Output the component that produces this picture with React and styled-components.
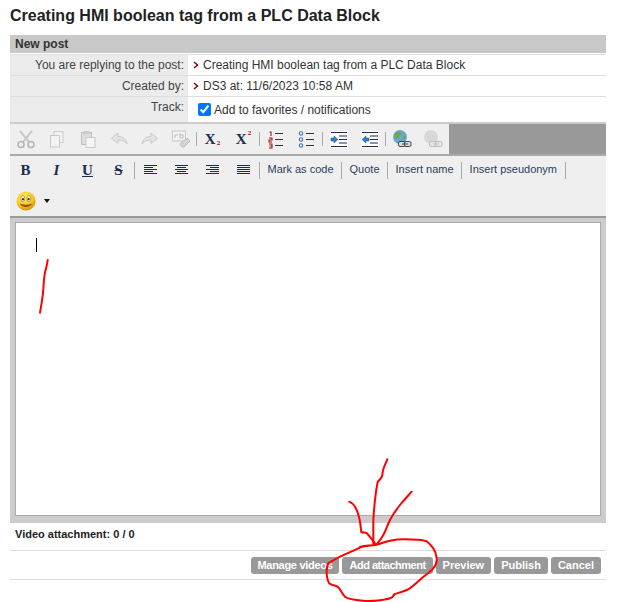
import React from "react";
import styled, { createGlobalStyle } from "styled-components";

const Global = createGlobalStyle`
  html, body { margin: 0; padding: 0; background: #fff; }
  body { font-family: "Liberation Sans", Arial, sans-serif; font-size: 12px; color: #333; }
`;
const Page = styled.div`
  position: relative; width: 630px; height: 602px; overflow: hidden; box-sizing: border-box; padding: 0 24px 0 10px;
`;
const Title = styled.h1`
  margin: 0; height: 35px; padding-top: 6px; box-sizing: border-box; font-size: 16px; line-height: 19px; font-weight: bold; color: #222;
`;
const SectionHead = styled.div`
  height: 18px; background: #c8c8c8; padding-left: 5px; font-size: 12px; line-height: 18px; font-weight: bold; color: #333;
`;
const Table = styled.div`
  display: grid; grid-template-columns: 178px 1fr; margin-top: 1px;
`;
const Label = styled.div`
  background: #ebebeb; height: ${p => p.$h}px; line-height: ${p => p.$lh || p.$h}px; text-align: right; padding-right: 4px;
  box-sizing: border-box; border-top: 1px solid #ddd; color: #444;
`;
const Value = styled.div`
  height: ${p => p.$h}px; display: flex; align-items: center; gap: 4px; padding-left: 5px; box-sizing: border-box; border-top: 1px solid #ddd; color: #333;
`;
const TrackValue = styled(Value)`
  padding: 0 0 0 10px; gap: 3px;
`;
const Check = styled.input`
  margin: 0; width: 13px; height: 13px; accent-color: #0075ff;
`;
const TopBar = styled.div`
  display: flex; height: 34px; background: #999; border-top: 2px solid #ccc; border-bottom: 2px solid #aaa; box-sizing: border-box;
`;
const TopTools = styled.div`
  width: 439px; background: #efefef; display: flex; align-items: center; box-sizing: border-box;
`;
const LowBar = styled.div`
  height: 62px; background: #efefef; border-bottom: 2px solid #999; box-sizing: border-box; display: flex; flex-direction: column;
`;
const ToolRow = styled.div`
  display: flex; align-items: center; height: 28px; margin-top: ${p => p.$mt || 0}px;
`;
const Tool = styled.div`
  width: ${p => p.$w || 31}px; height: 24px; flex: none; display: flex; align-items: center; justify-content: center;
  font-family: "Liberation Serif", serif; font-weight: bold; font-size: 15px; color: #1d2b4f; line-height: 1;
`;
const Sep = styled.div`
  width: 1px; height: ${p => p.$h || 17}px; flex: none; background: #aaa;
`;
const TextTool = styled.div`
  flex: none; color: #2c4060; font-size: 11px; line-height: 14px; padding: 0 7.500px 2px; white-space: nowrap;
`;
const Sup = styled.span`
  font-size: 7px; color: #a00; align-self: ${p => p.$up ? "flex-start" : "flex-end"}; margin: ${p => p.$up ? "3px 0 0 1px" : "0 0 4px 1px"};
`;
const EditorFrame = styled.div`
  background: #ccc; height: 305px; padding: 4px 5px 7px; box-sizing: border-box;
`;
const Editor = styled.div`
  height: 100%; background: #fff; border: 1px solid #aaa; box-sizing: border-box; padding: 15px 20px;
`;
const Caret = styled.div`
  width: 1px; height: 14px; background: #000;
`;
const Attach = styled.div`
  height: 27px; padding: 4px 0 0 5px; box-sizing: border-box; font-weight: bold; font-size: 11px; line-height: 14px; color: #222;
`;
const Actions = styled.div`
  height: 30px; border-top: 1px solid #ddd; border-bottom: 1px solid #ddd; box-sizing: border-box; display: flex; justify-content: flex-end; align-items: center; gap: 3px; padding-right: 5px;
`;
const Btn = styled.div`
  height: 17px; padding: 0 7px; border-radius: 3px; background: #999; color: #fff; font-weight: bold; font-size: 11px; line-height: 17px; white-space: nowrap;
  letter-spacing: ${p => p.$ls || 0}px;
`;
const Ink = styled.svg`
  position: absolute; left: 0; top: 0; width: 630px; height: 602px; pointer-events: none;
`;

const Chev = () => (
  <svg width="6" height="8" viewBox="0 0 6 8"><path d="M1 1l3.500 3L1 7" fill="none" stroke="#7a0a0a" strokeWidth="1.500" /></svg>
);
const G = ({ children }) => <svg width="20" height="20" viewBox="0 0 20 20">{children}</svg>;
const faint = "#c9c9c9";
const Scissors = () => (
  <G><path d="M4 2l9 11M16 2L7 13" stroke={faint} strokeWidth="2" fill="none" /><circle cx="5" cy="15.500" r="3" fill="none" stroke="#b5b5b5" strokeWidth="1.600" /><circle cx="15" cy="15.500" r="3" fill="none" stroke="#b5b5b5" strokeWidth="1.600" /></G>
);
const Copy = () => (
  <G><rect x="7" y="2.500" width="9" height="11" fill="#f3f3f3" stroke={faint} /><rect x="3.500" y="6.500" width="9" height="11.500" fill="#f3f3f3" stroke={faint} /></G>
);
const Paste = () => (
  <G><rect x="3.500" y="3.500" width="10" height="12" fill="#ddd" stroke="#c0c0c0" /><rect x="5.500" y="2" width="6" height="3" fill="#ccc" /><rect x="8" y="8.500" width="9" height="10" fill="#f5f5f5" stroke={faint} /></G>
);
const Undo = () => (
  <G><path d="M2.500 9.500L9 4v3.500c5 0 8 2.500 9 7.500-2-3-5-4-9-4v3.500z" fill="#e4e4e4" stroke={faint} /></G>
);
const Redo = () => (
  <G><path d="M17.500 9.500L11 4v3.500c-5 0-8 2.500-9 7.500 2-3 5-4 9-4v3.500z" fill="#e4e4e4" stroke={faint} /></G>
);
const Erase = () => (
  <G><rect x="1.500" y="2" width="13" height="10" fill="#f2f2f2" stroke={faint} /><path d="M4 9V6h3M9 4v5h3V6H9" fill="none" stroke="#bbb" /><path d="M9 15l7-6 3 3-6 6h-2z" fill="#d5d5d5" stroke="#bbb" /></G>
);
const OList = () => (
  <G><path d="M3.500 3h1.500v4M3 9h3v2H3v2h3M3 15h3v4H3M3.500 17H6" fill="none" stroke="#a01818" strokeWidth="1.100" /><path d="M9 4.500h8M9 10.500h8M9 16.500h8" stroke="#333" strokeWidth="1" /></G>
);
const UList = () => (
  <G><circle cx="4" cy="4.500" r="1.700" fill="none" stroke="#3a7ab8" strokeWidth="1.100" /><circle cx="4" cy="10.500" r="1.700" fill="none" stroke="#3a7ab8" strokeWidth="1.100" /><circle cx="4" cy="16.500" r="1.700" fill="none" stroke="#3a7ab8" strokeWidth="1.100" /><path d="M9 4.500h8M9 10.500h8M9 16.500h8" stroke="#333" strokeWidth="1" /></G>
);
const Indent = ({ out }) => (
  <G><rect x="1" y="2" width="18" height="17" fill="#fff" /><path d="M2 3.500h16M10 7h8M10 10.500h8M10 14h8M2 17.500h16" stroke="#1d2b4f" strokeWidth="1.100" />
    {out
      ? <path d="M2 10.500L6 7v2h3v3H6v2z" fill="#2f7fc8" stroke="#1a4f86" strokeWidth=".5" />
      : <path d="M9 10.500L5 7v2H2v3h3v2z" fill="#2f7fc8" stroke="#1a4f86" strokeWidth=".5" />}
  </G>
);
const Globe = ({ off }) => (
  <G>
    <circle cx="8" cy="8" r="7" fill={off ? "#d8d8d8" : "#6aa9d6"} />
    {!off && <path d="M3 5c2-3 5-3 6-2s1 3-1 4-1 3-3 3-3-3-2-5zM11 7c2-1 3 0 3 2l-3 2z" fill="#6fa94f" />}
    <rect x="6.500" y="12.500" width="7" height="5" rx="1.500" fill={off ? "#e8e8e8" : "#cfdde6"} stroke={off ? "#bbb" : "#444"} strokeWidth="1" />
    <rect x="12.500" y="12.500" width="6.500" height="5" rx="1.500" fill={off ? "#e8e8e8" : "#cfdde6"} stroke={off ? "#bbb" : "#444"} strokeWidth="1" />
    <path d="M10 15h6" stroke={off ? "#bbb" : "#444"} strokeWidth="1" />
  </G>
);
const Align = ({ kind }) => {
  const lines = [0, 1, 2, 3, 4].map(i => {
    const short = i % 2 === 1 ? 9 : 13;
    let x = 3;
    if (kind === "c") x = 3 + (13 - short) / 2;
    if (kind === "r") x = 16 - short;
    if (kind === "j") return <path key={i} d={`M3 ${5.5 + i * 2}h13`} stroke="#1d2b4f" />;
    return <path key={i} d={`M${x} ${5.5 + i * 2}h${short}`} stroke="#1d2b4f" />;
  });
  return <G>{lines}</G>;
};
const Smiley = () => (
  <svg width="20" height="20" viewBox="0 0 20 20">
    <defs><radialGradient id="sm" cx=".4" cy=".3" r=".75"><stop offset="0" stopColor="#ffee66" /><stop offset=".6" stopColor="#f9c81e" /><stop offset="1" stopColor="#d08a08" /></radialGradient></defs>
    <circle cx="10" cy="10" r="9.500" fill="url(#sm)" />
    <ellipse cx="6.800" cy="7.500" rx="2" ry="3" fill="#fff3c0" stroke="#8a6a20" strokeWidth=".6" /><ellipse cx="12.800" cy="7.500" rx="2" ry="3" fill="#fff3c0" stroke="#8a6a20" strokeWidth=".6" />
    <circle cx="7" cy="8.200" r="1.100" fill="#4a2a10" /><circle cx="12.600" cy="8.200" r="1.100" fill="#4a2a10" />
    <path d="M4.500 13c2 3.500 8.500 3.500 11 0-2.500 1.500-8.500 1.500-11 0z" fill="#a04010" stroke="#8a4a10" strokeWidth=".7" />
  </svg>
);
const Caretdown = () => (
  <svg width="6" height="4" viewBox="0 0 6 4"><path d="M0 0h6L3 4z" fill="#111" /></svg>
);

const s = { fill: "none", stroke: "#f00", strokeWidth: 2, strokeLinejoin: "round", strokeLinecap: "round" };

export default function App() {
  return (
    <Page>
      <Global />
      <Title>Creating HMI boolean tag from a PLC Data Block</Title>
      <SectionHead>New post</SectionHead>
      <Table>
        <Label $h={21}>You are replying to the post:</Label>
        <Value $h={21}><Chev /> Creating HMI boolean tag from a PLC Data Block</Value>
        <Label $h={21}>Created by:</Label>
        <Value $h={21}><Chev /> DS3 at: 11/6/2023 10:58 AM</Value>
        <Label $h={26} $lh={21}>Track:</Label>
        <TrackValue $h={26}><Check type="checkbox" defaultChecked readOnly /> Add to favorites / notifications</TrackValue>
      </Table>
      <TopBar>
        <TopTools>
          <Tool><Scissors /></Tool>
          <Tool><Copy /></Tool>
          <Tool><Paste /></Tool>
          <Tool><Undo /></Tool>
          <Tool><Redo /></Tool>
          <Tool><Erase /></Tool>
          <Sep $h={14} />
          <Tool>X<Sup>2</Sup></Tool>
          <Tool>X<Sup $up>2</Sup></Tool>
          <Sep $h={14} />
          <Tool><OList /></Tool>
          <Tool><UList /></Tool>
          <Sep $h={14} />
          <Tool><Indent /></Tool>
          <Tool><Indent out /></Tool>
          <Sep $h={14} />
          <Tool><Globe /></Tool>
          <Tool><Globe off /></Tool>
        </TopTools>
      </TopBar>
      <LowBar>
        <ToolRow>
          <Tool>B</Tool>
          <Tool><em>I</em></Tool>
          <Tool><u>U</u></Tool>
          <Tool><s>S</s></Tool>
          <Sep />
          <Tool><Align kind="l" /></Tool>
          <Tool><Align kind="c" /></Tool>
          <Tool><Align kind="r" /></Tool>
          <Tool><Align kind="j" /></Tool>
          <Sep />
          <TextTool>Mark as code</TextTool>
          <Sep />
          <TextTool>Quote</TextTool>
          <Sep />
          <TextTool>Insert name</TextTool>
          <Sep />
          <TextTool>Insert pseudonym</TextTool>
          <Sep />
        </ToolRow>
        <ToolRow $mt={3}>
          <Tool><Smiley /></Tool>
          <Tool $w={12}><Caretdown /></Tool>
        </ToolRow>
      </LowBar>
      <EditorFrame>
        <Editor><Caret /></Editor>
      </EditorFrame>
      <Attach>Video attachment: 0 / 0</Attach>
      <Actions>
        <Btn $ls={-0.3}>Manage videos</Btn>
        <Btn $ls={-0.5}>Add attachment</Btn>
        <Btn>Preview</Btn>
        <Btn>Publish</Btn>
        <Btn>Cancel</Btn>
      </Actions>
      <Ink viewBox="0 0 630 602">
        <path {...s} d="M47.700 260C47 266 45 271 44.300 276.700S43.500 288 43 293 41 307 40 312.700" />
        <path {...s} d="M387.300 459.300C385 465 383 468 382.700 472S382.500 477 377.700 481.700C376 490 375.500 495 375 500S373.300 515 373.300 523.300V543.300L375.300 545" />
        <path {...s} d="M349.300 501.700C352 503 354 505 355 506.700S358 513 359.300 518.300 361 530 361.300 532C364 533 365 532 366.700 533.300S373 541 375 543.300" />
        <path {...s} d="M411.700 491.700C407 497 404 500 400 505S393 514 390 520 386 530 383.300 535 379 541 376.700 544.300" />
        <path {...s} d="M375 545C368 546 363 546 358.300 548.300S345 554 340 556.700 332 561 328.300 563.300C326.500 567 326.500 570 326.700 573.300S327.500 581 329.300 583.300 336 585 338.300 587.300 342 594 345 596.700 355 600 363.300 600.700 385 600 390 598.300 392 595 395 594 402 592 406.700 590 416 583 421.700 578.300 431 571 433.300 568.300 437 562 436.700 558.300 436 552 433.300 548.300 429 543 427.300 541.700 415 539.500 406.700 539.300 396 539.500 390 540.700 381 544 375 545 365 544.500 360 547" />
      </Ink>
    </Page>
  );
}
